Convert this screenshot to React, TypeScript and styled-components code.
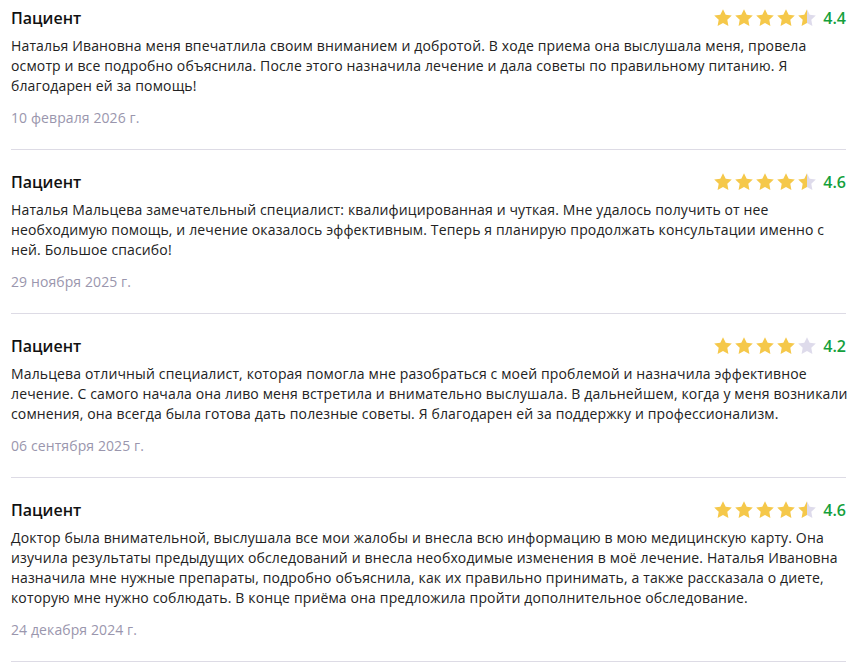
import styled, { createGlobalStyle } from 'styled-components'

const GlobalStyle = createGlobalStyle`
  body {
    margin: 0;
    background: #fff;
    font-family: 'Open Sans', 'Noto Sans', sans-serif;
    color: #222;
  }
`

const List = styled.div`
  padding: 6px 10px 0 11px;
`

const Review = styled.article`
  padding: 20px 0 21px;
  border-bottom: 1px solid #dddbe5;

  &:first-child {
    padding-top: 0;
  }
`

const Head = styled.div`
  display: flex;
  align-items: center;
  justify-content: space-between;
  height: 24px;
`

const Author = styled.h3`
  margin: 0;
  font-size: 16px;
  font-weight: 600;
  color: #111;
`

const Rating = styled.div`
  display: flex;
  align-items: center;
  gap: 6px;
`

const Stars = styled.div`
  display: flex;
  gap: 1px;
`

const Score = styled.span`
  font-size: 16px;
  font-weight: 600;
  color: #14a03c;
  line-height: 24px;
`

const Text = styled.p`
  margin: 6px -3px 0 0;
  font-size: 14px;
  line-height: 20px;
  letter-spacing: 0.14px;
`

const Date = styled.div`
  margin-top: 12px;
  font-size: 14px;
  line-height: 20px;
  letter-spacing: 0.1px;
  color: #9a96ad;
`

const STAR = 'M10 1.2l2.7 5.6 6.1.8-4.5 4.2 1.1 6.1L10 15l-5.4 2.9 1.1-6.1L1.2 7.6l6.1-.8z'

const Star = ({ fill, id }: { fill: number; id: string }) => (
  <svg width="20" height="20" viewBox="0 0 20 20">
    <defs>
      <linearGradient id={id}>
        <stop offset={fill} stopColor="#f5c84a" />
        <stop offset={fill} stopColor="#dedbeb" />
      </linearGradient>
    </defs>
    <path d={STAR} fill={`url(#${id})`} />
  </svg>
)

const StarRow = ({ value, name }: { value: number; name: string }) => {
  const fills = [0, 1, 2, 3, 4].map((i) => {
    const f = Math.max(0, Math.min(1, value - i))
    if (f >= 0.9) return 1
    if (f <= 0.25) return 0
    return 0.5
  })
  return (
    <Stars>
      {fills.map((f, i) => (
        <Star key={i} fill={f} id={`${name}-${i}`} />
      ))}
    </Stars>
  )
}

const reviews = [
  {
    score: 4.4,
    text: 'Наталья Ивановна меня впечатлила своим вниманием и добротой. В ходе приема она выслушала меня, провела осмотр и все подробно объяснила. После этого назначила лечение и дала советы по правильному питанию. Я благодарен ей за помощь!',
    date: '10 февраля 2026 г.',
  },
  {
    score: 4.6,
    text: 'Наталья Мальцева замечательный специалист: квалифицированная и чуткая. Мне удалось получить от нее необходимую помощь, и лечение оказалось эффективным. Теперь я планирую продолжать консультации именно с ней. Большое спасибо!',
    date: '29 ноября 2025 г.',
  },
  {
    score: 4.2,
    text: 'Мальцева отличный специалист, которая помогла мне разобраться с моей проблемой и назначила эффективное лечение. С самого начала она ливо меня встретила и внимательно выслушала. В дальнейшем, когда у меня возникали сомнения, она всегда была готова дать полезные советы. Я благодарен ей за поддержку и профессионализм.',
    date: '06 сентября 2025 г.',
  },
  {
    score: 4.6,
    text: 'Доктор была внимательной, выслушала все мои жалобы и внесла всю информацию в мою медицинскую карту. Она изучила результаты предыдущих обследований и внесла необходимые изменения в моё лечение. Наталья Ивановна назначила мне нужные препараты, подробно объяснила, как их правильно принимать, а также рассказала о диете, которую мне нужно соблюдать. В конце приёма она предложила пройти дополнительное обследование.',
    date: '24 декабря 2024 г.',
  },
]

const App = () => {
  return (
    <>
      <GlobalStyle />
      <List>
        {reviews.map((r, i) => (
          <Review key={i}>
            <Head>
              <Author>Пациент</Author>
              <Rating>
                <StarRow value={r.score} name={`r${i}`} />
                <Score>{r.score.toFixed(1)}</Score>
              </Rating>
            </Head>
            <Text>{r.text}</Text>
            <Date>{r.date}</Date>
          </Review>
        ))}
      </List>
    </>
  )
}

export default App
